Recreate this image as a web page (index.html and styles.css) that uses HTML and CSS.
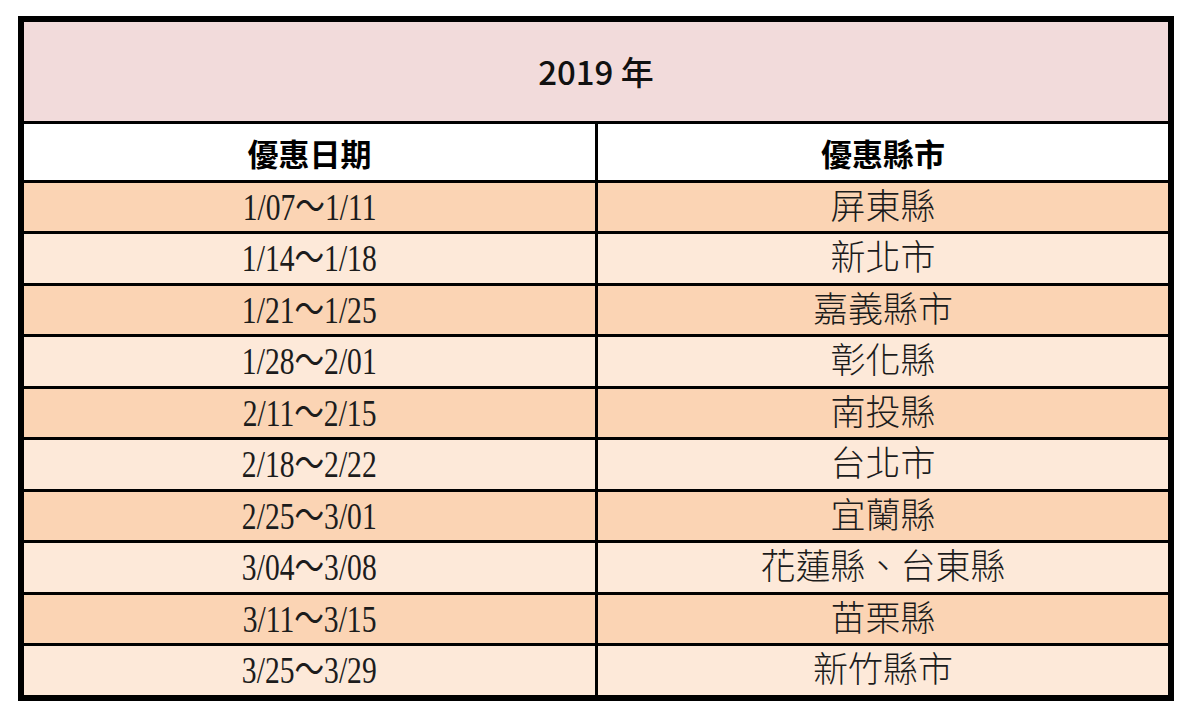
FILE: index.html
```html
<!DOCTYPE html>
<html lang="zh-Hant">
<head>
<meta charset="utf-8">
<title>2019 年 優惠日期</title>
<link rel="stylesheet" href="styles.css">
</head>
<body>
<table class="sched">
  <colgroup>
    <col class="col-date">
    <col class="col-city">
  </colgroup>
  <thead>
    <tr class="year-row"><th colspan="2">2019 年</th></tr>
    <tr class="col-row"><th>優惠日期</th><th>優惠縣市</th></tr>
  </thead>
  <tbody>
    <tr class="dark"><td><span class="date">1/07～1/11</span></td><td>屏東縣</td></tr>
    <tr class="light"><td><span class="date">1/14～1/18</span></td><td>新北市</td></tr>
    <tr class="dark"><td><span class="date">1/21～1/25</span></td><td>嘉義縣市</td></tr>
    <tr class="light"><td><span class="date">1/28～2/01</span></td><td>彰化縣</td></tr>
    <tr class="dark"><td><span class="date">2/11～2/15</span></td><td>南投縣</td></tr>
    <tr class="light"><td><span class="date">2/18～2/22</span></td><td>台北市</td></tr>
    <tr class="dark"><td><span class="date">2/25～3/01</span></td><td>宜蘭縣</td></tr>
    <tr class="light"><td><span class="date">3/04～3/08</span></td><td>花蓮縣、台東縣</td></tr>
    <tr class="dark"><td><span class="date">3/11～3/15</span></td><td>苗栗縣</td></tr>
    <tr class="light"><td><span class="date">3/25～3/29</span></td><td>新竹縣市</td></tr>
  </tbody>
</table>
</body>
</html>
```
FILE: styles.css
```css
html, body {
  margin: 0;
  padding: 0;
  background: #ffffff;
}

.sched {
  margin: 16px 0 0 18px;
  width: 1156px;
  border: 6px solid #000;
  border-collapse: separate;
  border-spacing: 0;
  table-layout: fixed;
  color: #111;
}

.col-date {
  width: 574px;
}

.col-city {
  width: 570px;
}

.sched th,
.sched td {
  padding: 0;
  text-align: center;
  vertical-align: middle;
  line-height: 1;
}

.year-row th {
  height: 99px;
  background: #f2dbdb;
  font-family: "Noto Sans CJK TC", "Noto Sans", sans-serif;
  font-weight: 500;
  font-size: 33px;
  color: #111;
}

.col-row th {
  height: 56px;
  background: #ffffff;
  border-top: 3px solid #000;
  font-family: "Noto Sans CJK TC", sans-serif;
  font-weight: 700;
  font-size: 31px;
  color: #000;
}

.col-row th:first-child,
tbody td:first-child {
  border-right: 3px solid #000;
}

tbody td {
  border-top: 3px solid #000;
  font-family: "Liberation Serif", "Noto Sans CJK TC", serif;
  font-size: 35px;
  font-weight: 300;
  color: #1c1c1c;
}

tbody tr.dark td {
  height: 48px;
  background: #fbd4b4;
}

tbody tr.light td {
  height: 49px;
  background: #fde9d9;
}

.date {
  display: inline-block;
  font-size: 37px;
  font-weight: 400;
  transform: scaleX(0.8);
  white-space: nowrap;
}
```
